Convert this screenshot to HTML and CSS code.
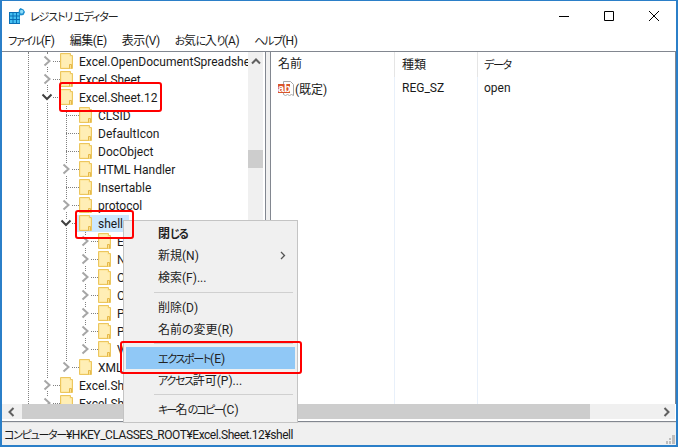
FILE: index.html
```html
<!DOCTYPE html>
<html lang="ja">
<head>
    <meta charset="UTF-8">
    <title>レジストリ エディター</title>
    <link rel="stylesheet" href="styles.css">
</head>
<body>
    <svg class="svg-defs" width="0" height="0">
        <defs>
            <symbol id="folder" viewBox="0 0 13 16">
                <path d="M.5.5h10v2h2v13H.5z" fill="#fde28f" stroke="#ecc65e"/>
                <path d="M1.500 1.500h8v2h2v11h-10z" fill="#ffeeb5"/>
                <path d="M9.500 15.500v-4h2v4" fill="#fde28f" stroke="#e5b84a"/>
            </symbol>
            <symbol id="chev-right" viewBox="0 0 9 12">
                <path d="M1.500 1.500 6.500 6l-5 4.500" fill="none" stroke="#a6a6a6" stroke-width="2"/>
            </symbol>
            <symbol id="chev-down" viewBox="0 0 12 9">
                <path d="M1.500 1.500 6 6l4.500-4.500" fill="none" stroke="#404040" stroke-width="2"/>
            </symbol>
        </defs>
    </svg>

    <div class="window">
        <header class="titlebar">
            <svg class="app-icon" width="16" height="16" viewBox="0 0 16 16">
                <path d="M0 4h11v12H0z" fill="#0a6fb5"/>
                <path d="M1 5h2.500v2.500H1zM4.500 5H7v2.500H4.500zM8 5h2.500v2.500H8zM1 8.500h2.500V11H1zM4.500 8.500H7V11H4.500zM8 8.500h2.500V11H8zM1 12h2.500v3H1zM4.500 12H7v3H4.500zM8 12h2.500v3H8z" fill="#45c0f2"/>
                <path d="M11.500 0 14.500 1.500 16 4l-1.500 3-3 .5-2-2.500.5-3.500z" fill="#1d8fd0"/>
                <path d="M11.500 2h2l1 1.500-1 2h-2l-.5-2z" fill="#8fdcf8"/>
            </svg>
            <span class="title-text kana">レジストリ エディター</span>
            <div class="window-buttons">
                <svg width="10" height="10" viewBox="0 0 10 10"><path d="M0 5.500h10" stroke="#000" fill="none"/></svg>
                <svg width="10" height="10" viewBox="0 0 10 10"><path d="M.5.500h9v9h-9z" stroke="#000" fill="none"/></svg>
                <svg width="10" height="10" viewBox="0 0 10 10"><path d="M0 0l10 10M10 0 0 10" stroke="#000" fill="none"/></svg>
            </div>
        </header>

        <nav class="menubar">
            <span><span class="kana">ファイル</span>(F)</span>
            <span>編集(E)</span>
            <span>表示(V)</span>
            <span><span class="kana">お</span>気<span class="kana">に</span>入<span class="kana">り</span>(A)</span>
            <span><span class="kana">ヘルプ</span>(H)</span>
        </nav>

        <div class="panes">
            <div class="tree-pane">
                <ul class="tree">
                    <li><div class="row"><svg class="arrow arrow-r" width="9" height="12"><use href="#chev-right"/></svg><span class="dash"></span><span class="node"><svg class="folder" width="13" height="16"><use href="#folder"/></svg><span class="label">Excel.OpenDocumentSpreadsheet</span></span></div></li>
                    <li><div class="row"><svg class="arrow arrow-r" width="9" height="12"><use href="#chev-right"/></svg><span class="dash"></span><span class="node"><svg class="folder" width="13" height="16"><use href="#folder"/></svg><span class="label">Excel.Sheet</span></span></div></li>
                    <li>
                        <div class="row"><svg class="arrow arrow-d" width="12" height="9"><use href="#chev-down"/></svg><span class="dash"></span><span class="node"><svg class="folder" width="13" height="16"><use href="#folder"/></svg><span class="label">Excel.Sheet.12</span></span></div>
                        <ul class="branch">
                            <li><div class="row"><span class="dash"></span><span class="node"><svg class="folder" width="13" height="16"><use href="#folder"/></svg><span class="label">CLSID</span></span></div></li>
                            <li><div class="row"><span class="dash"></span><span class="node"><svg class="folder" width="13" height="16"><use href="#folder"/></svg><span class="label">DefaultIcon</span></span></div></li>
                            <li><div class="row"><span class="dash"></span><span class="node"><svg class="folder" width="13" height="16"><use href="#folder"/></svg><span class="label">DocObject</span></span></div></li>
                            <li><div class="row"><svg class="arrow arrow-r" width="9" height="12"><use href="#chev-right"/></svg><span class="dash"></span><span class="node"><svg class="folder" width="13" height="16"><use href="#folder"/></svg><span class="label">HTML Handler</span></span></div></li>
                            <li><div class="row"><span class="dash"></span><span class="node"><svg class="folder" width="13" height="16"><use href="#folder"/></svg><span class="label">Insertable</span></span></div></li>
                            <li><div class="row"><svg class="arrow arrow-r" width="9" height="12"><use href="#chev-right"/></svg><span class="dash"></span><span class="node"><svg class="folder" width="13" height="16"><use href="#folder"/></svg><span class="label">protocol</span></span></div></li>
                            <li>
                                <div class="row"><svg class="arrow arrow-d" width="12" height="9"><use href="#chev-down"/></svg><span class="dash"></span><span class="node selected"><svg class="folder" width="13" height="16"><use href="#folder"/></svg><span class="label">shell</span></span></div>
                                <ul class="branch">
                                    <li><div class="row"><svg class="arrow arrow-r" width="9" height="12"><use href="#chev-right"/></svg><span class="dash"></span><span class="node"><svg class="folder" width="13" height="16"><use href="#folder"/></svg><span class="label">Edit</span></span></div></li>
                                    <li><div class="row"><svg class="arrow arrow-r" width="9" height="12"><use href="#chev-right"/></svg><span class="dash"></span><span class="node"><svg class="folder" width="13" height="16"><use href="#folder"/></svg><span class="label">New</span></span></div></li>
                                    <li><div class="row"><svg class="arrow arrow-r" width="9" height="12"><use href="#chev-right"/></svg><span class="dash"></span><span class="node"><svg class="folder" width="13" height="16"><use href="#folder"/></svg><span class="label">Open</span></span></div></li>
                                    <li><div class="row"><svg class="arrow arrow-r" width="9" height="12"><use href="#chev-right"/></svg><span class="dash"></span><span class="node"><svg class="folder" width="13" height="16"><use href="#folder"/></svg><span class="label">OpenAsReadOnly</span></span></div></li>
                                    <li><div class="row"><svg class="arrow arrow-r" width="9" height="12"><use href="#chev-right"/></svg><span class="dash"></span><span class="node"><svg class="folder" width="13" height="16"><use href="#folder"/></svg><span class="label">Print</span></span></div></li>
                                    <li><div class="row"><svg class="arrow arrow-r" width="9" height="12"><use href="#chev-right"/></svg><span class="dash"></span><span class="node"><svg class="folder" width="13" height="16"><use href="#folder"/></svg><span class="label">PrintTo</span></span></div></li>
                                    <li><div class="row"><svg class="arrow arrow-r" width="9" height="12"><use href="#chev-right"/></svg><span class="dash"></span><span class="node"><svg class="folder" width="13" height="16"><use href="#folder"/></svg><span class="label">ViewProtected</span></span></div></li>
                                </ul>
                            </li>
                            <li><div class="row"><svg class="arrow arrow-r" width="9" height="12"><use href="#chev-right"/></svg><span class="dash"></span><span class="node"><svg class="folder" width="13" height="16"><use href="#folder"/></svg><span class="label">XML</span></span></div></li>
                        </ul>
                    </li>
                    <li><div class="row"><svg class="arrow arrow-r" width="9" height="12"><use href="#chev-right"/></svg><span class="dash"></span><span class="node"><svg class="folder" width="13" height="16"><use href="#folder"/></svg><span class="label">Excel.SheetBinaryMacroEnabled.12</span></span></div></li>
                    <li><div class="row"><svg class="arrow arrow-r" width="9" height="12"><use href="#chev-right"/></svg><span class="dash"></span><span class="node"><svg class="folder" width="13" height="16"><use href="#folder"/></svg><span class="label">Excel.SheetMacroEnabled.12</span></span></div></li>
                </ul>
                <div class="vscroll">
                    <svg class="scroll-up" width="10" height="7" viewBox="0 0 10 7"><path d="M1 5.500 5 1.500l4 4" fill="none" stroke="#606060" stroke-width="2"/></svg>
                    <div class="vthumb"></div>
                </div>
            </div>
            <div class="splitter"></div>
            <div class="list-pane">
                <div class="list-head">
                    <div class="col col-name">名前</div>
                    <div class="col col-type">種類</div>
                    <div class="col col-data"><span class="kana">データ</span></div>
                </div>
                <div class="list-row">
                    <div class="col col-name">
                        <svg class="ab-icon" width="16" height="15" viewBox="0 0 16 15">
                            <path d="M5.500.5h7l3 3v11l-2-1-2 1-2-1-2 1-2-1z" fill="#fff" stroke="#a8a8a8"/>
                            <path d="M0 3h12v9H0z" fill="#d9552b"/>
                            <text x="0" y="10.500" class="ab-text">ab</text>
                        </svg>
                        <span>(既定)</span>
                    </div>
                    <div class="col col-type">REG_SZ</div>
                    <div class="col col-data">open</div>
                </div>
            </div>
        </div>

        <div class="hscroll">
            <div class="htrack">
                <svg class="scroll-left" width="7" height="10" viewBox="0 0 7 10"><path d="M5.500 1 1.500 5l4 4" fill="none" stroke="#606060" stroke-width="2"/></svg>
                <div class="hthumb"></div>
                <svg class="scroll-right" width="7" height="10" viewBox="0 0 7 10"><path d="M1.500 1l4 4-4 4" fill="none" stroke="#606060" stroke-width="2"/></svg>
            </div>
        </div>

        <footer class="statusbar">
            <span><span class="kana">コンピューター</span>¥HKEY_CLASSES_ROOT¥Excel.Sheet.12¥shell</span>
            <svg class="grip" width="9" height="9" viewBox="0 0 9 9"><path d="M6 0h3v3H6zM3 3h2v2H3zM6 3h3v3H6zM0 6h2v3H0zM3 6h2v3H3zM6 6h3v3H6z" fill="#bdbdbd"/></svg>
        </footer>

        <div class="context-menu">
            <div class="item item-bold">閉<span class="kana">じる</span></div>
            <div class="item">新規(N)<svg class="sub-arrow" width="6" height="9" viewBox="0 0 6 9"><path d="M1 1l3.500 3.500L1 8" fill="none" stroke="#555" stroke-width="1.300"/></svg></div>
            <div class="item">検索(F)...</div>
            <div class="sep sep-first"></div>
            <div class="item">削除(D)</div>
            <div class="item">名前の変更(R)</div>
            <div class="sep"></div>
            <div class="item item-active"><span class="kana">エクスポート</span>(E)</div>
            <div class="item"><span class="kana">アクセス</span>許可(P)...</div>
            <div class="sep"></div>
            <div class="item item-copy"><span class="kana">キー</span>名<span class="kana">のコピー</span>(C)</div>
        </div>

        <div class="mark mark-sheet"></div>
        <div class="mark mark-shell"></div>
        <div class="mark mark-export"></div>
    </div>
</body>
</html>
```

FILE: styles.css
```css
* {
    box-sizing: border-box;
}
html, body {
    margin: 0;
    height: 100%;
}
body {
    font-family: Roboto, "Noto Sans CJK JP", sans-serif;
    font-size: 12px;
    font-feature-settings: "palt";
    color: #1a1a1a;
    background: #fff;
    overflow: hidden;
}
ul {
    list-style: none;
    margin: 0;
    padding: 0;
}
.svg-defs {
    position: absolute;
}
/* kana run narrower in the original UI font */
.kana {
    font-size: 11px;
    letter-spacing: -1.3px;
}

.window {
    position: relative;
    width: 678px;
    height: 447px;
    display: flex;
    flex-direction: column;
    border: 2px solid #2b7fc8;
    border-top-width: 1px;
    background: #fff;
    overflow: hidden;
}

.titlebar {
    height: 29px;
    display: flex;
    align-items: center;
    flex: none;
    padding-left: 7px;
}
.app-icon {
    margin-right: 5px;
}
.title-text {
    color: #222;
    letter-spacing: -1.1px;
    white-space: pre;
}
.window-buttons {
    margin-left: auto;
    display: flex;
    gap: 35px;
    padding-right: 17px;
}

.menubar {
    height: 21px;
    display: flex;
    align-items: center;
    gap: 15px;
    padding: 0 6px 2px;
    flex: none;
    letter-spacing: -0.4px;
}

.panes {
    flex: 1;
    min-height: 0;
    display: flex;
    border-top: 1px solid #828790;
}
.tree-pane {
    position: relative;
    width: 264px;
    flex: none;
    overflow: hidden;
    border-right: 1px solid #828790;
    background: #fff;
}
.tree {
    position: relative;
    margin-left: 26px;
    white-space: nowrap;
}
.tree::before,
.tree::after {
    content: "";
    position: absolute;
    top: 0;
    bottom: 0;
    border-left: 1px dotted #808080;
}
.tree::before {
    left: 0;
}
.tree::after {
    left: 19px;
}
.tree > li > .row {
    padding-left: 19px;
}
.branch {
    position: relative;
    margin-left: 19px;
}
.tree > li > .branch {
    margin-left: 38px;
}
.branch::before {
    content: "";
    position: absolute;
    left: 0;
    top: 0;
    bottom: 9px;
    border-left: 1px dotted #808080;
}
.row {
    position: relative;
    height: 18px;
    display: flex;
    align-items: center;
}
.dash {
    width: 13px;
    height: 0;
    border-top: 1px dotted #808080;
    flex: none;
}
.node {
    display: flex;
    align-items: center;
    height: 17px;
}
.node.selected {
    margin-left: -3px;
    padding: 0 6px 0 3px;
    background: #cce8ff;
}
.folder {
    flex: none;
}
.label {
    margin-left: 6px;
    padding-top: 2px;
    line-height: 18px;
}
.arrow {
    position: absolute;
    top: 50%;
    z-index: 1;
    background: #fff;
}
.arrow-r {
    margin-top: -6px;
    margin-left: -4px;
}
.arrow-d {
    margin-top: -4px;
    margin-left: -6px;
}

.vscroll {
    position: absolute;
    top: 0;
    right: 2px;
    bottom: 0;
    width: 15px;
    background: #f0f0f0;
    z-index: 2;
}
.scroll-up {
    position: absolute;
    top: 6px;
    left: 3px;
}
.vthumb {
    position: absolute;
    top: 98px;
    left: 0;
    width: 15px;
    height: 18px;
    background: #cdcdcd;
}

.splitter {
    width: 4px;
    flex: none;
    background: #f0f0f0;
}
.list-pane {
    flex: 1;
    min-width: 0;
    border-left: 1px solid #828790;
    border-right: 1px solid #828790;
    display: flex;
    flex-direction: column;
    background-image: linear-gradient(#e8f0fa, #e8f0fa), linear-gradient(#e8f0fa, #e8f0fa);
    background-size: 1px 100%;
    background-repeat: no-repeat;
    background-position: 123px 0, 206px 0;
}
.list-head,
.list-row {
    display: flex;
    align-items: center;
    height: 25px;
    flex: none;
}
.list-row {
    height: 20px;
    padding-top: 2px;
}
.col {
    flex: none;
    padding-left: 7px;
}
.list-head .col {
    border-right: 1px solid #e5e5e5;
    background: #fff;
    height: 25px;
    line-height: 27px;
}
.col-name {
    width: 124px;
    display: flex;
    align-items: center;
    gap: 1px;
}
.col-type {
    width: 83px;
}
.col-data {
    flex: 1;
    padding-left: 6px;
}
.list-head .col-data {
    border-right: 0;
}
.ab-icon {
    flex: none;
}
.ab-text {
    font-family: "Liberation Sans", sans-serif;
    font-size: 11px;
    font-weight: bold;
    fill: #fff;
}

.hscroll {
    height: 18px;
    flex: none;
    background: #fff;
    border-bottom: 1px solid #828790;
}
.htrack {
    position: relative;
    height: 15px;
    margin-right: 1px;
    background: #f0f0f0;
    display: flex;
    align-items: center;
}
.scroll-left {
    position: absolute;
    left: 6px;
}
.scroll-right {
    position: absolute;
    right: 5px;
}
.hthumb {
    position: absolute;
    left: 20px;
    width: 568px;
    top: 0;
    bottom: 0;
    background: #cdcdcd;
}

.statusbar {
    height: 23px;
    flex: none;
    background: #f0f0f0;
    padding-left: 2px;
    display: flex;
    align-items: center;
    position: relative;
    border-top: 1px solid #e0e0e0;
    letter-spacing: -0.45px;
}
.statusbar .kana {
    letter-spacing: -1.3px;
}
.grip {
    position: absolute;
    right: 1px;
    bottom: 1px;
}

.context-menu {
    position: absolute;
    left: 121px;
    top: 219px;
    width: 175px;
    padding: 1px 2px 2px;
    background: #f0f0f0;
    border: 1px solid #c4c4c4;
    z-index: 3;
}
.item {
    position: relative;
    height: 22px;
    line-height: 24px;
    padding-left: 32px;
    color: #222;
}
.item-bold {
    font-weight: 700;
}
.item-active {
    background: #90c8f6;
}
.item-copy .kana {
    letter-spacing: -1.8px;
}
.sub-arrow {
    position: absolute;
    right: 9px;
    top: 7px;
}
.sep {
    height: 1px;
    margin: 3px 2px 3px 28px;
    background: #d0d0d0;
}
.sep-first {
    margin-top: 4px;
}

.mark {
    position: absolute;
    border: 2px solid #f00;
    border-radius: 3px;
    z-index: 4;
}
.mark-sheet {
    left: 57px;
    top: 81px;
    width: 103px;
    height: 30px;
}
.mark-shell {
    left: 73px;
    top: 209px;
    width: 59px;
    height: 29px;
}
.mark-export {
    left: 118px;
    top: 340px;
    width: 182px;
    height: 33px;
}
```
